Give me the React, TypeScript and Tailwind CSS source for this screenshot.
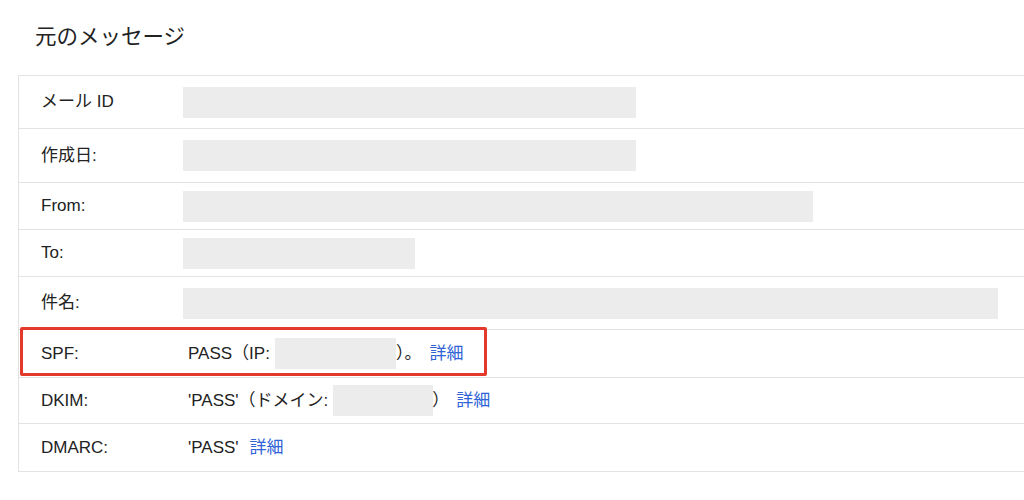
import React from "react";

const font = {
  fontFamily: '"Liberation Sans", "Noto Sans CJK JP", sans-serif',
};

const Blank = ({ w }: { w: string }) => (
  <span className={`inline-block h-[31px] bg-[#ececec] align-middle ${w}`} />
);

const Link = () => <span className="text-[#2f63d6]">詳細</span>;

const rows: { label: string; h: string; value: React.ReactNode; boxed?: boolean }[] = [
  { label: "メール ID", h: "h-[52px]", value: <Blank w="w-[453px]" /> },
  { label: "作成日:", h: "h-[54px]", value: <Blank w="w-[453px]" /> },
  { label: "From:", h: "h-[47px]", value: <Blank w="w-[630px]" /> },
  { label: "To:", h: "h-[47px]", value: <Blank w="w-[232px]" /> },
  { label: "件名:", h: "h-[53px]", value: <Blank w="w-[815px]" /> },
  {
    label: "SPF:",
    h: "h-[48px]",
    boxed: true,
    value: (
      <span className="flex items-center pl-[5px]">
        PASS（IP:
        <span className="ml-[5px] inline-block h-[31px] w-[121px] bg-[#ececec]" />
        ）。<span className="ml-[8px]"><Link /></span>
      </span>
    ),
  },
  {
    label: "DKIM:",
    h: "h-[46px]",
    value: (
      <span className="flex items-center pl-[5px]">
        'PASS'（ドメイン:
        <span className="ml-[5px] inline-block h-[31px] w-[100px] bg-[#ececec]" />
        <span className="ml-[-1px]">）</span>
        <span className="ml-[7px]"><Link /></span>
      </span>
    ),
  },
  {
    label: "DMARC:",
    h: "h-[48px]",
    value: (
      <span className="flex items-center pl-[5px]">
        'PASS'<span className="ml-[11px]"><Link /></span>
      </span>
    ),
  },
];

export default function App() {
  return (
    <div className="h-[500px] w-[1024px] overflow-hidden bg-white text-[#222]" style={font}>
      <h1 className="pl-[35px] pt-[24px] text-[21.5px] leading-[26px] text-[#222]">元のメッセージ</h1>
      <div className="ml-[18px] mt-[25px] w-[1020px] border border-[#e2e2e2]">
        {rows.map((r, i) => (
          <div
            key={r.label}
            className={`relative flex items-center text-[17px] ${r.h} ${
              i > 0 ? "border-t border-[#e2e2e2]" : ""
            }`}
          >
            <div className="w-[164px] shrink-0 pl-[22px]">{r.label}</div>
            <div className="flex items-center">{r.value}</div>
            {r.boxed && (
              <div className="absolute left-[1px] top-[-3px] h-[49px] w-[467px] rounded-[2px] border-[3px] border-[#e3382c]" />
            )}
          </div>
        ))}
      </div>
    </div>
  );
}
